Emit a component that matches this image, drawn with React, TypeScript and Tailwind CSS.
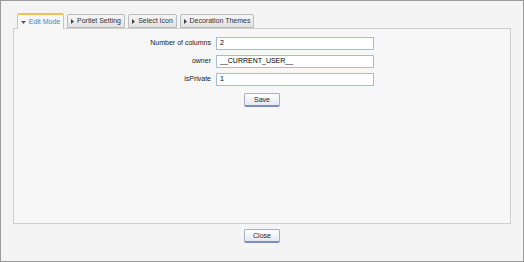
import React from 'react';

const FONT = { fontFamily: '"Liberation Sans", Arial, sans-serif' };

const TABS = [
    { label: 'Portlet Setting', width: 'w-[58px]' },
    { label: 'Select Icon', width: 'w-[49px]' },
    { label: 'Decoration Themes', width: 'w-[74px]' },
];

const FIELDS = [
    { label: 'Number of columns', value: '2' },
    { label: 'owner', value: '__CURRENT_USER__' },
    { label: 'isPrivate', value: '1' },
];

function DownArrow() {
    return (
        <svg width="5" height="3" viewBox="0 0 5 3" className="shrink-0">
            <path d="M0 0h5L2.5 3z" fill="#555" />
        </svg>
    );
}

function RightArrow() {
    return (
        <svg width="3" height="5" viewBox="0 0 3 5" className="shrink-0">
            <path d="M0 0v5l3-2.5z" fill="#444" />
        </svg>
    );
}

function SmallButton({ label }: { label: string }) {
    return (
        <button className="w-[36px] h-[14px] flex items-center justify-center rounded-[2px] border border-[#a9adbd] border-b-[#7d8cc4] border-b-2 bg-gradient-to-b from-white to-[#e6e8f2] text-[7px] text-[#222] leading-none">
            {label}
        </button>
    );
}

export default function App() {
    return (
        <div
            className="w-[524px] h-[262px] border border-[#9a9a9a] bg-[#f4f4f4] flex flex-col pt-3 px-3"
            style={FONT}
        >
            {/* tab strip */}
            <div className="flex items-end gap-[3px] pl-1 h-[16px] relative z-10 -mb-px">
                <div className="w-[47px] h-[16px] flex items-center justify-center gap-[3px] border border-[#c4c4c4] border-b-0 border-t-2 border-t-[#f0c24a] bg-[#f7f7f7] rounded-t-[2px] text-[7px] text-[#4a80c8]">
                    <DownArrow />
                    <span>Edit Mode</span>
                </div>
                {TABS.map((tab) => (
                    <div
                        key={tab.label}
                        className={`${tab.width} h-[14px] mb-px flex items-center justify-center gap-[3px] border border-[#bcbcbc] rounded-t-[2px] bg-gradient-to-b from-[#f6f6f6] to-[#e2e2e2] text-[7px] text-[#333]`}
                    >
                        <RightArrow />
                        <span>{tab.label}</span>
                    </div>
                ))}
            </div>

            {/* panel */}
            <div className="h-[196px] border border-[#cfcfcf] bg-[#f7f7f7] flex flex-col pt-[8px]">
                <div className="flex flex-col gap-[5px]">
                    {FIELDS.map((f) => (
                        <div key={f.label} className="flex items-center h-[13px]">
                            <div className="w-[202px] pr-[5px] text-right text-[7px] text-[#222]">
                                {f.label}
                            </div>
                            <div className="w-[158px] h-[13px] border border-[#a8bcd8] bg-white pl-[3px] flex items-center text-[7px] text-black">
                                {f.value}
                            </div>
                        </div>
                    ))}
                </div>
                <div className="flex justify-center mt-[7px]">
                    <SmallButton label="Save" />
                </div>
            </div>

            <div className="flex justify-center mt-[5px]">
                <SmallButton label="Close" />
            </div>
        </div>
    );
}
